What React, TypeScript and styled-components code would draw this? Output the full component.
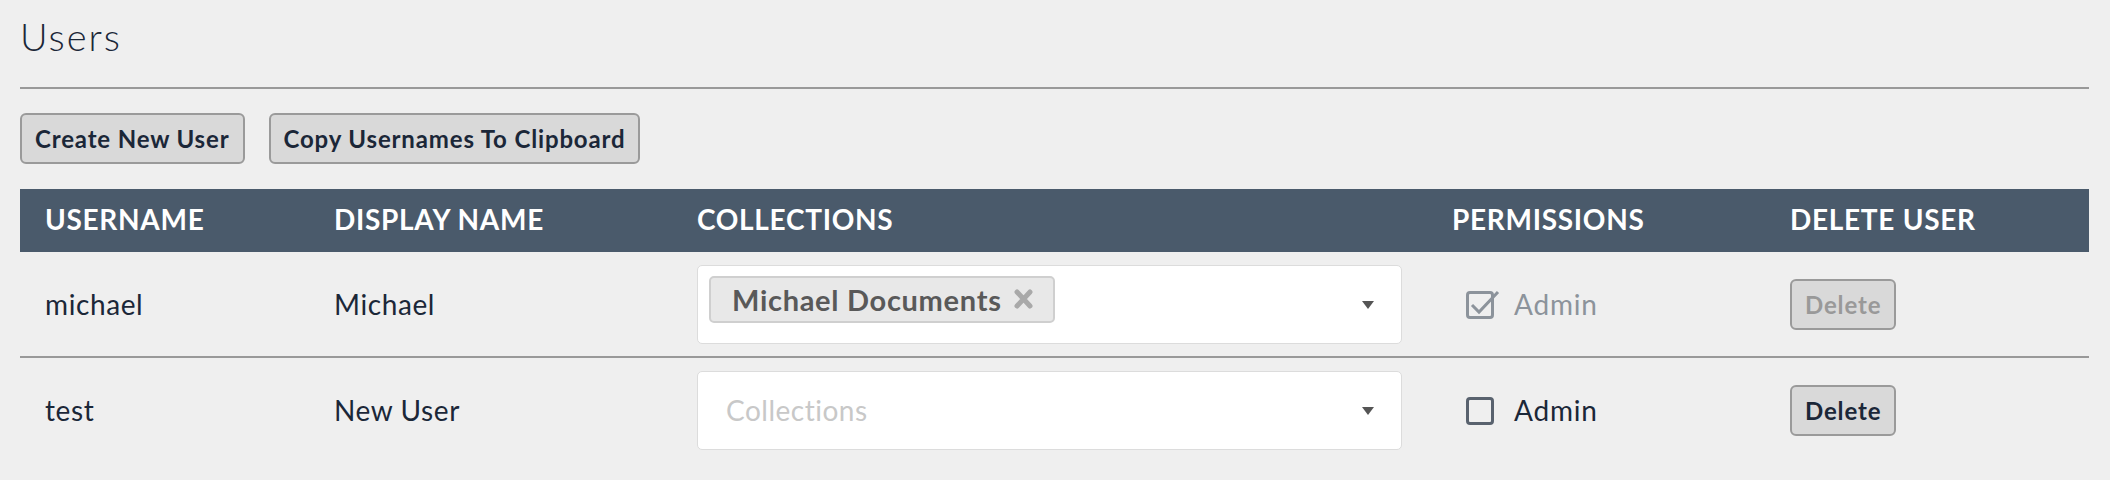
import React from "react";
import styled, { createGlobalStyle } from "styled-components";

const GlobalStyle = createGlobalStyle`
  html, body {
    margin: 0;
    padding: 0;
    background: #efefef;
    font-family: Lato, "Open Sans", "Liberation Sans", sans-serif;
    color: #1b2738;
  }
`;

const Page = styled.div`
  width: 2069px;
  margin-left: 20px;
`;

const Title = styled.h1`
  margin: 0;
  padding-top: 14px;
  font-size: 38px;
  line-height: 45px;
  font-weight: 300;
  letter-spacing: 2px;
  color: #1b2738;
`;

const Rule = styled.hr`
  margin: 28px 0 0;
  border: 0;
  border-top: 2px solid #999;
  height: 0;
`;

const Toolbar = styled.div`
  display: flex;
  gap: 24px;
  margin-top: 24px;
`;

const Button = styled.button<{ $disabled?: boolean }>`
  height: 51px;
  padding: 0 13px;
  border: 2px solid #9a9a9a;
  border-radius: 6px;
  background: #d9d9d9;
  font-family: inherit;
  font-size: 24px;
  font-weight: 700;
  letter-spacing: 0.85px;
  color: ${(p) => (p.$disabled ? "#999" : "#1b2738")};
  cursor: ${(p) => (p.$disabled ? "default" : "pointer")};
`;

const Table = styled.div`
  margin-top: 25px;
`;

const columns = "289px 363px 755px 338px 1fr";

const HeaderRow = styled.div`
  display: grid;
  grid-template-columns: ${columns};
  align-items: center;
  height: 63px;
  box-sizing: border-box;
  padding-bottom: 3px;
  background: #4a5a6b;
`;

const HeaderCell = styled.div`
  padding-left: 25px;
  font-size: 28px;
  font-weight: 700;
  letter-spacing: 0.7px;
  color: #fff;
`;

const Row = styled.div<{ $last?: boolean }>`
  display: grid;
  grid-template-columns: ${columns};
  align-items: center;
  padding: 13px 0 12px;
  border-bottom: ${(p) => (p.$last ? "none" : "2px solid #999")};
`;

const Cell = styled.div`
  padding: 0 0 2px 25px;
  font-size: 28px;
  letter-spacing: 0.6px;
  color: #1b2738;
`;

const SelectCell = styled.div`
  padding-left: 25px;
`;

const Select = styled.div<{ $hasValue?: boolean }>`
  display: flex;
  align-items: ${(p) => (p.$hasValue ? "flex-start" : "center")};
  height: 79px;
  box-sizing: border-box;
  border: 1px solid #dcdcdc;
  border-radius: 5px;
  background: #fff;
  margin-right: 25px;
`;

const Values = styled.div<{ $hasValue?: boolean }>`
  flex: 1;
  display: flex;
  padding: ${(p) => (p.$hasValue ? "10px 0 0 11px" : "0 0 2px 28px")};
`;

const Chip = styled.div`
  display: flex;
  align-items: center;
  gap: 11px;
  height: 47px;
  box-sizing: border-box;
  padding: 0 19px 1px 21px;
  border: 2px solid #cfcfcf;
  border-radius: 5px;
  background: #e8e8e8;
  font-size: 29px;
  font-weight: 700;
  letter-spacing: 0.7px;
  color: #595959;
`;

const Placeholder = styled.span`
  font-size: 28px;
  letter-spacing: 0.5px;
  color: #c8c8c8;
`;

const Arrow = styled.div`
  align-self: center;
  width: 0;
  height: 0;
  margin-right: 27px;
  border-left: 6.5px solid transparent;
  border-right: 6.5px solid transparent;
  border-top: 8px solid #555;
`;

const Permission = styled.label<{ $disabled?: boolean }>`
  display: flex;
  align-items: center;
  gap: 14px;
  padding-left: 39px;
  font-size: 28px;
  letter-spacing: 0.8px;
  color: ${(p) => (p.$disabled ? "#8c939b" : "#1b2738")};
`;

const PermissionText = styled.span`
  padding-bottom: 2px;
`;

const DeleteCell = styled.div`
  padding-left: 25px;
`;

const RemoveIcon = () => (
  <svg width="21" height="22" viewBox="0 0 21 22" aria-hidden>
    <path d="M4 4 L17 18 M17 4 L4 18" stroke="#a9a9a9" strokeWidth="5" strokeLinecap="round" />
  </svg>
);

const CheckBox = ({ checked, disabled }: { checked: boolean; disabled: boolean }) => {
  const color = disabled ? "#8c939b" : "#59626e";
  return (
    <svg width="34" height="28" viewBox="0 0 34 28" aria-hidden style={{ overflow: "visible" }}>
      <rect x="1.5" y="1.5" width="25" height="25" rx="2.5" fill="none" stroke={color} strokeWidth="3" />
      {checked && (
        <path d="M6 14 L13 21 L32 1" fill="none" stroke={color} strokeWidth="3" />
      )}
    </svg>
  );
};

type User = {
  username: string;
  displayName: string;
  collections: string[];
  admin: boolean;
  self: boolean;
};

const users: User[] = [
  { username: "michael", displayName: "Michael", collections: ["Michael Documents"], admin: true, self: true },
  { username: "test", displayName: "New User", collections: [], admin: false, self: false },
];

export default function App() {
  return (
    <>
      <GlobalStyle />
      <Page>
        <Title>Users</Title>
        <Rule />
        <Toolbar>
          <Button>Create New User</Button>
          <Button>Copy Usernames To Clipboard</Button>
        </Toolbar>
        <Table>
          <HeaderRow>
            <HeaderCell>USERNAME</HeaderCell>
            <HeaderCell>DISPLAY NAME</HeaderCell>
            <HeaderCell>COLLECTIONS</HeaderCell>
            <HeaderCell>PERMISSIONS</HeaderCell>
            <HeaderCell>DELETE USER</HeaderCell>
          </HeaderRow>
          {users.map((u, i) => {
            const hasValue = u.collections.length > 0;
            return (
              <Row key={u.username} $last={i === users.length - 1}>
                <Cell>{u.username}</Cell>
                <Cell>{u.displayName}</Cell>
                <SelectCell>
                  <Select $hasValue={hasValue}>
                    <Values $hasValue={hasValue}>
                      {hasValue ? (
                        u.collections.map((c) => (
                          <Chip key={c}>
                            {c}
                            <RemoveIcon />
                          </Chip>
                        ))
                      ) : (
                        <Placeholder>Collections</Placeholder>
                      )}
                    </Values>
                    <Arrow />
                  </Select>
                </SelectCell>
                <Permission $disabled={u.self}>
                  <CheckBox checked={u.admin} disabled={u.self} />
                  <PermissionText>Admin</PermissionText>
                </Permission>
                <DeleteCell>
                  <Button $disabled={u.self}>Delete</Button>
                </DeleteCell>
              </Row>
            );
          })}
        </Table>
      </Page>
    </>
  );
}
